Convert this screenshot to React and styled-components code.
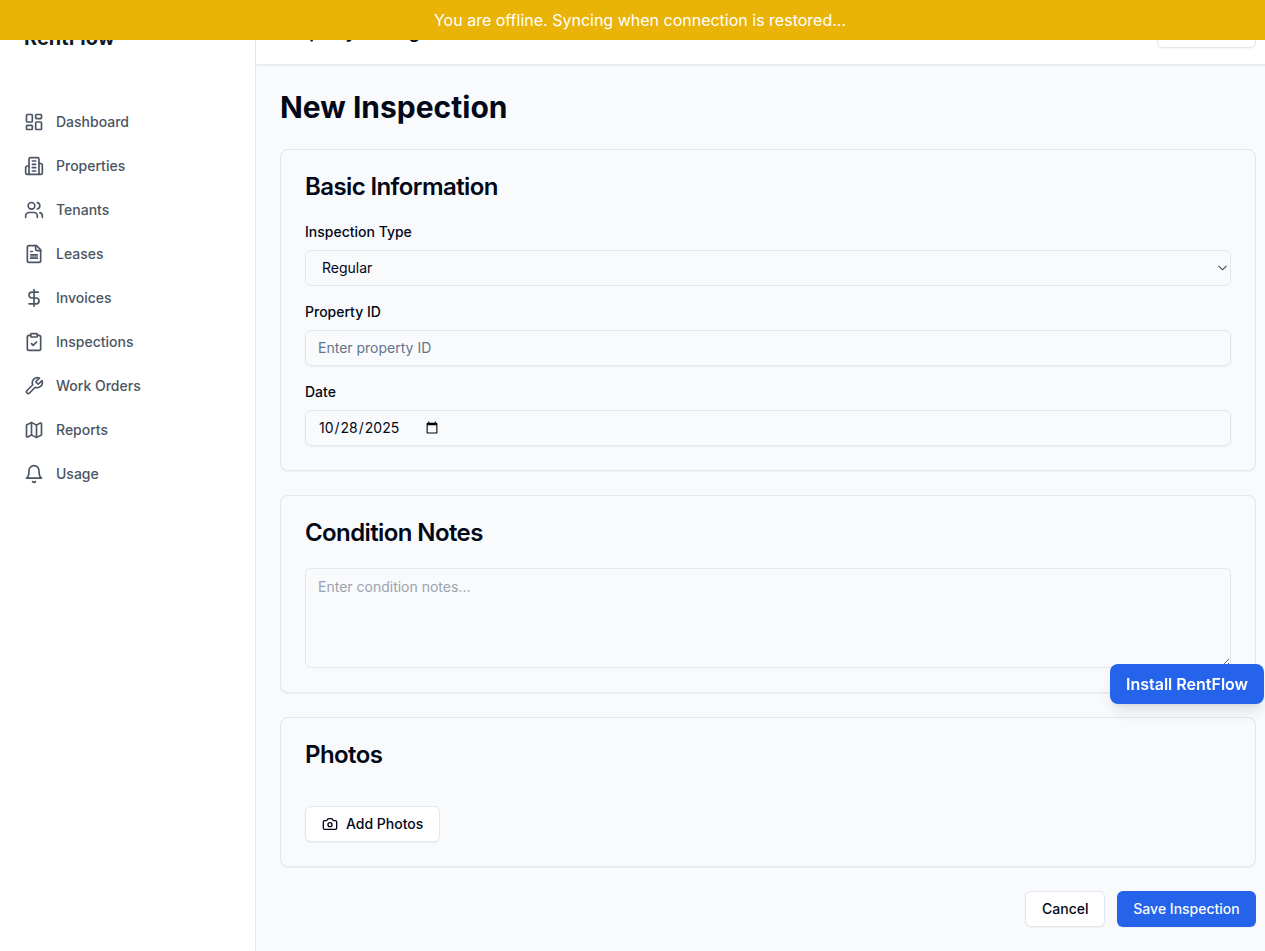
import React from "react";
import styled, { createGlobalStyle, css } from "styled-components";
import { LayoutDashboard, Users, DollarSign, ClipboardCheck, Map as MapIcon, Camera } from "lucide-react";

const GlobalStyle = createGlobalStyle`
  *, *::before, *::after { box-sizing: border-box; }
  html, body { margin: 0; overflow: hidden; }
  body {
    font-family: Inter, "Liberation Sans", sans-serif;
    font-size: 16px;
    line-height: 24px;
    color: #020817;
    background: #f8fafc;
    -webkit-font-smoothing: antialiased;
  }
  h1, h2, p { margin: 0; }
  button, input, select, textarea { font: inherit; color: inherit; margin: 0; }
`;

const Shell = styled.div`
  display: flex;
  width: 1280px;
  height: 951px;
`;

const OfflineBanner = styled.div`
  position: fixed;
  top: 0;
  left: 0;
  z-index: 50;
  width: 1280px;
  padding: 8px;
  text-align: center;
  color: #fff;
  background: #eab308;
`;

const Sidebar = styled.aside`
  flex: none;
  width: 256px;
  background: #fff;
  border-right: 1px solid #e2e8f0;
`;

const Brand = styled.div`
  padding: 24px;
  height: 76px;
  font-size: 20px;
  line-height: 28px;
  font-weight: 700;
  color: #111827;
`;

const Nav = styled.nav`
  display: flex;
  flex-direction: column;
  gap: 4px;
  padding: 26px 12px 0;
`;

const NavItem = styled.a`
  display: flex;
  align-items: center;
  gap: 12px;
  height: 40px;
  padding: 0 12px;
  font-size: 14px;
  line-height: 20px;
  font-weight: 500;
  color: #4b5563;
`;

const Page = styled.div`
  flex: 1;
  min-width: 0;
  display: flex;
  flex-direction: column;
`;

const Header = styled.header`
  flex: none;
  display: flex;
  align-items: center;
  justify-content: space-between;
  height: 65px;
  padding: 0 24px;
  background: #fff;
  border-bottom: 1px solid #e2e8f0;
  box-shadow: 0 1px 2px rgba(0, 0, 0, 0.05);
`;

const HeaderTitle = styled.div`
  font-size: 18px;
  line-height: 28px;
  font-weight: 600;
`;

const Main = styled.main`
  display: flex;
  flex-direction: column;
  gap: 24px;
  padding: 24px;
`;

const PageTitle = styled.h1`
  font-size: 30px;
  line-height: 36px;
  font-weight: 700;
`;

const Card = styled.section`
  padding: 24px;
  border: 1px solid #e2e8f0;
  border-radius: 8px;
  background: #f8fafc;
  box-shadow: 0 1px 2px rgba(0, 0, 0, 0.05);
`;

const CardTitle = styled.h2`
  margin-bottom: 22px;
  font-size: 24px;
  line-height: 26px;
  font-weight: 600;
  letter-spacing: -0.6px;
`;

const Fields = styled.div`
  display: flex;
  flex-direction: column;
  gap: 16px;
`;

const Field = styled.label`
  display: flex;
  flex-direction: column;
  gap: 8px;
  font-size: 14px;
  line-height: 20px;
  font-weight: 500;
`;

const control = css`
  display: block;
  width: 100%;
  border: 1px solid #e2e8f0;
  border-radius: 6px;
  background: transparent;
  font-size: 14px;
  line-height: 20px;
  font-weight: 400;
  outline: none;
`;

const Input = styled.input`
  ${control}
  height: 36px;
  padding: ${(p) => (p.type === "date" ? "4px 12px" : "3px 12px 5px")};
  box-shadow: 0 1px 2px rgba(0, 0, 0, 0.05);
  &::placeholder { color: #64748b; }
  &::-webkit-datetime-edit { flex: none; margin-inline-end: -3px; }
`;

const SelectWrap = styled.div`
  position: relative;
  svg {
    position: absolute;
    right: 4px;
    top: 15px;
    pointer-events: none;
  }
`;

const Select = styled.select`
  ${control}
  appearance: none;
  height: 36px;
  padding: 4px 16px;
`;

const Textarea = styled.textarea`
  ${control}
  height: 100px;
  padding: 8px 12px;
  &::placeholder { color: #9ca3af; }
`;

const Button = styled.button`
  display: inline-flex;
  align-items: center;
  justify-content: center;
  gap: 8px;
  height: ${(p) => (p.$small ? "32px" : "36px")};
  min-width: ${(p) => (p.$small ? "99px" : "0")};
  padding: 0 ${(p) => (p.$primary ? "16.25px" : "16px")};
  border: ${(p) => (p.$primary ? "0" : "1px solid #e2e8f0")};
  border-radius: 6px;
  background: ${(p) => (p.$primary ? "#2563eb" : "#fff")};
  color: ${(p) => (p.$primary ? "#f8fafc" : "#020817")};
  font-size: ${(p) => (p.$small ? "12px" : "14px")};
  line-height: 20px;
  font-weight: 500;
  white-space: nowrap;
  box-shadow: 0 1px 2px rgba(0, 0, 0, 0.05);
`;

const PhotoActions = styled.div`
  display: flex;
  padding-top: 16px;
`;

const FormActions = styled.div`
  display: flex;
  justify-content: flex-end;
  gap: 11.6px;
`;

const InstallButton = styled.button`
  position: fixed;
  left: 1110px;
  top: 664px;
  z-index: 40;
  width: 154px;
  height: 40px;
  padding: 0;
  border: 0;
  border-radius: 8px;
  background: #2563eb;
  color: #fff;
  font-weight: 600;
  white-space: nowrap;
  box-shadow: 0 10px 15px -3px rgba(0, 0, 0, 0.1), 0 4px 6px -4px rgba(0, 0, 0, 0.1);
`;

const Glyph = ({ size = 20, children }) => (
  <svg width={size} height={size} viewBox="0 0 24 24" fill="none" stroke="currentColor"
    strokeWidth="2" strokeLinecap="round" strokeLinejoin="round">
    {children}
  </svg>
);

const Building = () => (
  <Glyph>
    <path d="M6 22V4a2 2 0 0 1 2-2h8a2 2 0 0 1 2 2v18Z" />
    <path d="M6 12H4a2 2 0 0 0-2 2v6a2 2 0 0 0 2 2h2" />
    <path d="M18 9h2a2 2 0 0 1 2 2v9a2 2 0 0 1-2 2h-2" />
    <path d="M10 6h4M10 10h4M10 14h4M10 18h4" />
  </Glyph>
);

const Document = () => (
  <Glyph>
    <path d="M15 2H6a2 2 0 0 0-2 2v16a2 2 0 0 0 2 2h12a2 2 0 0 0 2-2V7Z" />
    <path d="M14 2v4a2 2 0 0 0 2 2h4" />
    <path d="M10 9H8M16 13H8M16 17H8" />
    <path d="M16 15H8" strokeOpacity="0.6" />
  </Glyph>
);

const WrenchIcon = () => (
  <Glyph>
    <path d="M14.7 6.3a1 1 0 0 0 0 1.4l1.6 1.6a1 1 0 0 0 1.4 0l3.77-3.77a6 6 0 0 1-7.94 7.94l-6.91 6.91a2.12 2.12 0 0 1-3-3l6.91-6.91a6 6 0 0 1 7.94-7.94l-3.76 3.76z" />
  </Glyph>
);

const BellIcon = () => (
  <Glyph>
    <path d="M6 8a6 6 0 0 1 12 0c0 7 3 9 3 9H3s3-2 3-9" />
    <path d="M10.3 21a1.94 1.94 0 0 0 3.4 0" />
  </Glyph>
);

const navItems = [
  ["Dashboard", LayoutDashboard],
  ["Properties", Building],
  ["Tenants", Users],
  ["Leases", Document],
  ["Invoices", DollarSign],
  ["Inspections", ClipboardCheck],
  ["Work Orders", WrenchIcon],
  ["Reports", MapIcon],
  ["Usage", BellIcon],
];

export default function App() {
  return (
    <>
      <GlobalStyle />
      <OfflineBanner>You are offline. Syncing when connection is restored...</OfflineBanner>
      <Shell>
        <Sidebar>
          <Brand>RentFlow</Brand>
          <Nav>
            {navItems.map(([label, Icon]) => (
              <NavItem key={label}>
                <Icon size={20} />
                {label}
              </NavItem>
            ))}
          </Nav>
        </Sidebar>
        <Page>
          <Header>
            <HeaderTitle>Property Management</HeaderTitle>
            <Button $small aria-label="Account" />
          </Header>
          <Main>
            <PageTitle>New Inspection</PageTitle>
            <Card>
              <CardTitle>Basic Information</CardTitle>
              <Fields>
                <Field>
                  Inspection Type
                  <SelectWrap>
                    <Select defaultValue="regular">
                      <option value="regular">Regular</option>
                    </Select>
                    <svg width="9" height="6" viewBox="0 0 9 6" fill="none" stroke="#4b4f5a" strokeWidth="1.1">
                      <path d="M0.4 0.9 4.5 4.7 8.6 0.9" />
                    </svg>
                  </SelectWrap>
                </Field>
                <Field>
                  Property ID
                  <Input placeholder="Enter property ID" />
                </Field>
                <Field>
                  Date
                  <Input type="date" defaultValue="2025-10-28" />
                </Field>
              </Fields>
            </Card>
            <Card>
              <CardTitle>Condition Notes</CardTitle>
              <Textarea placeholder="Enter condition notes..." />
            </Card>
            <Card>
              <CardTitle>Photos</CardTitle>
              <PhotoActions>
                <Button>
                  <Camera size={16} />
                  Add Photos
                </Button>
              </PhotoActions>
            </Card>
            <FormActions>
              <Button>Cancel</Button>
              <Button $primary>Save Inspection</Button>
            </FormActions>
          </Main>
        </Page>
      </Shell>
      <InstallButton>Install RentFlow</InstallButton>
    </>
  );
}
